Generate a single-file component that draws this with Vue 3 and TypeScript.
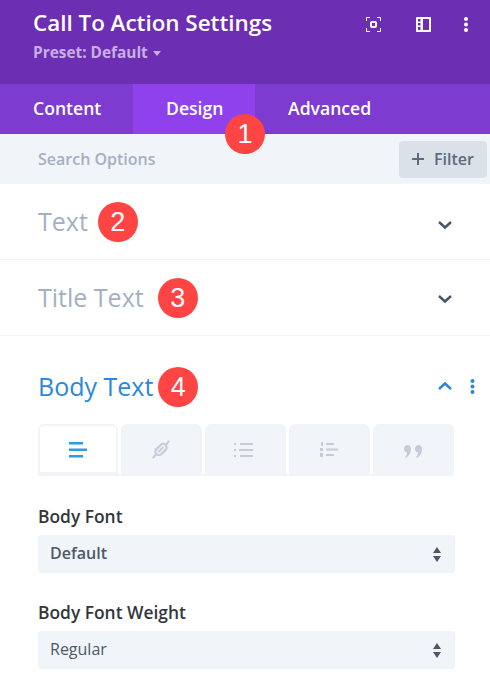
<template>
    <div class="panel">
        <header class="head">
            <div class="titles">
                <h1>Call To Action Settings</h1>
                <div class="preset">Preset: Default <span class="caret"></span></div>
            </div>
            <div class="head-icons">
                <svg width="15" height="15" viewBox="0 0 15 15" fill="none" stroke="#fff">
                    <path d="M.5 4V.5H4M11 .5h3.500V4M14.500 11v3.500H11M4 14.500H.5V11" />
                    <rect x="5" y="5" width="5" height="5" rx="1" stroke-width="2" />
                </svg>
                <svg width="15" height="15" viewBox="0 0 15 15">
                    <path
                        fill="#fff"
                        fill-rule="evenodd"
                        d="M1 0h13a1 1 0 0 1 1 1v13a1 1 0 0 1-1 1H1a1 1 0 0 1-1-1V1a1 1 0 0 1 1-1Zm1 2v2.500h2.500V2Zm0 4v2.500h2.500V6Zm0 4v3h2.500v-3ZM7 2v11h6V2Z"
                    />
                </svg>
                <svg class="more" width="6" height="15" viewBox="0 0 6 15" fill="#fff">
                    <circle cx="3" cy="2" r="2" />
                    <circle cx="3" cy="7.500" r="2" />
                    <circle cx="3" cy="13" r="2" />
                </svg>
            </div>
        </header>

        <nav class="tabs">
            <div class="tab first">Content</div>
            <div class="tab active">
                Design
                <span class="badge one">1</span>
            </div>
            <div class="tab">Advanced</div>
        </nav>

        <div class="search">
            <span class="placeholder">Search Options</span>
            <button class="filter">
                <svg width="12" height="12" viewBox="0 0 12 12" fill="#5d6b7c">
                    <path d="M5 0h2v5h5v2H7v5H5V7H0V5h5Z" />
                </svg>
                Filter
            </button>
        </div>

        <section class="group">
            <h2>Text</h2>
            <span class="badge inline b2">2</span>
            <svg class="chev" width="16" height="10" viewBox="0 0 16 10" fill="none" stroke="#475569" stroke-width="2.400">
                <path d="M2 2l6 5.500L14 2" />
            </svg>
        </section>
        <section class="group">
            <h2>Title Text</h2>
            <span class="badge inline b3">3</span>
            <svg class="chev" width="16" height="10" viewBox="0 0 16 10" fill="none" stroke="#475569" stroke-width="2.400">
                <path d="M2 2l6 5.500L14 2" />
            </svg>
        </section>

        <section class="open">
            <div class="open-head">
                <h2>Body Text</h2>
                <span class="badge inline b4">4</span>
                <svg class="chev up" width="16" height="10" viewBox="0 0 16 10" fill="none" stroke="#2b87da" stroke-width="2.400">
                    <path d="M2 8l6-5.500L14 8" />
                </svg>
                <svg class="dots" width="5" height="15" viewBox="0 0 5 15" fill="#2b87da">
                    <circle cx="2.500" cy="2" r="2" />
                    <circle cx="2.500" cy="7.500" r="2" />
                    <circle cx="2.500" cy="13" r="2" />
                </svg>
            </div>

            <div class="subtabs">
                <div class="subtab current">
                    <svg width="18" height="16" viewBox="0 0 18 16" fill="#2b9bea">
                        <rect x="0" y="0" width="14" height="2.500" />
                        <rect x="0" y="6.500" width="18" height="2.500" />
                        <rect x="0" y="13" width="14" height="2.500" />
                    </svg>
                </div>
                <div class="subtab">
                    <svg width="18" height="19" viewBox="0 0 18 19" fill="none" stroke="#c3ccd8">
                        <rect x="2.500" y="6" width="13" height="7" rx="3.500" stroke-width="2.200" transform="rotate(-45 9 9.500)" />
                        <path d="M6.500 12 11.500 7" stroke-width="1.800" />
                        <path d="M.8 18.200 3.800 14.700M14.200 4.300 17.200.8" stroke-width="2" />
                    </svg>
                </div>
                <div class="subtab list">
                    <svg width="19" height="14" viewBox="0 0 19 14" fill="#c3ccd8">
                        <rect x="0" y="0" width="2" height="2" />
                        <rect x="0" y="6" width="2" height="2" />
                        <rect x="0" y="12" width="2" height="2" />
                        <rect x="6" y="0" width="13" height="2" />
                        <rect x="5" y="6" width="14" height="2" />
                        <rect x="6" y="12" width="13" height="2" />
                    </svg>
                </div>
                <div class="subtab">
                    <svg width="19" height="15" viewBox="0 0 19 15" fill="#c3ccd8">
                        <rect x="1" y="0" width="2" height="4" />
                        <rect x="0" y="6" width="3" height="3" />
                        <rect x="0" y="11" width="3" height="4" />
                        <rect x="6" y="1" width="8" height="2" />
                        <rect x="6" y="6.500" width="12" height="2" />
                        <rect x="6" y="12" width="8" height="2" />
                    </svg>
                </div>
                <div class="subtab quote">
                    <svg width="18" height="13" viewBox="0 0 18 13" fill="#c3ccd8">
                        <path d="M3.500 0C6 0 7 2 7 4 7 8 5 11 2 13L1 12C2.500 10.500 3 9 3 7.500 1.200 7.200 0 5.800 0 3.800 0 1.500 1.500 0 3.500 0Z" />
                        <path transform="translate(11)" d="M3.500 0C6 0 7 2 7 4 7 8 5 11 2 13L1 12C2.500 10.500 3 9 3 7.500 1.200 7.200 0 5.800 0 3.800 0 1.500 1.500 0 3.500 0Z" />
                    </svg>
                </div>
            </div>

            <div class="field">
                <label>Body Font</label>
                <div class="select">
                    <span class="strong">Default</span>
                    <svg width="8" height="15" viewBox="0 0 8 15" fill="#4d5868">
                        <path d="M4 0l4 6H0ZM0 9h8l-4 6Z" />
                    </svg>
                </div>
            </div>
            <div class="field">
                <label>Body Font Weight</label>
                <div class="select">
                    <span>Regular</span>
                    <svg width="8" height="15" viewBox="0 0 8 15" fill="#4d5868">
                        <path d="M4 0l4 6H0ZM0 9h8l-4 6Z" />
                    </svg>
                </div>
            </div>
        </section>
    </div>
</template>

<script setup lang="ts"></script>

<style>
html,
body {
    margin: 0;
    background: #fff;
}
</style>

<style scoped>
.panel {
    width: 490px;
    height: 688px;
    overflow: hidden;
    font-family: "Open Sans", sans-serif;
    background: #fff;
}
.head {
    height: 84px;
    box-sizing: border-box;
    background: #6c2eb3;
    padding: 8px 21px 0 33px;
    display: flex;
    justify-content: space-between;
}
h1 {
    margin: 0;
    font-size: 22.4px;
    line-height: 30px;
    font-weight: 600;
    color: #fff;
}
.preset {
    margin-top: 5px;
    font-size: 15.4px;
    line-height: 20px;
    font-weight: 700;
    color: #c8aee6;
}
.caret {
    display: inline-block;
    margin-left: 1px;
    vertical-align: 2px;
    border: 4px solid transparent;
    border-top: 5px solid #c8aee6;
    border-bottom: 0;
}
.head-icons {
    display: flex;
    align-items: center;
    gap: 35px;
    height: 33px;
}
.more {
    margin-left: -3px;
}
.tabs {
    height: 50px;
    display: flex;
    background: #7d3bcf;
}
.tab {
    position: relative;
    width: 122px;
    box-sizing: border-box;
    padding-left: 33px;
    font-size: 17.6px;
    font-weight: 600;
    line-height: 48px;
    color: #fff;
}
.tab.first {
    width: 133px;
}
.tab.active {
    background: #8f42ec;
}
.badge {
    position: absolute;
    width: 40px;
    height: 40px;
    border-radius: 50%;
    background: #ff4444;
    color: #fff;
    font-family: "Liberation Sans", sans-serif;
    font-size: 27px;
    font-weight: 400;
    line-height: 40px;
    text-align: center;
}
.badge.one {
    left: 92px;
    top: 30px;
}
.search {
    height: 50px;
    box-sizing: border-box;
    background: #f1f5f9;
    display: flex;
    align-items: center;
    justify-content: space-between;
    padding: 0 3px 0 38px;
}
.placeholder {
    font-size: 16px;
    font-weight: 600;
    color: #a3b0c2;
}
.filter {
    width: 88px;
    height: 37px;
    border: 0;
    border-radius: 4px;
    background: #dbe1e9;
    color: #5d6b7c;
    font-family: inherit;
    font-size: 16px;
    font-weight: 600;
    display: flex;
    align-items: center;
    justify-content: center;
    gap: 10px;
    padding: 0;
}
.group {
    position: relative;
    height: 76px;
    box-sizing: border-box;
    border-bottom: 1px solid #f1f5f9;
    display: flex;
    align-items: center;
    padding-left: 38px;
}
h2 {
    margin: 0 0 2px;
    font-size: 25px;
    font-weight: 400;
    line-height: 32px;
    color: #a3b0c2;
}
.badge.inline {
    position: static;
    flex: none;
}
.b2 {
    margin-left: 10px;
}
.b3 {
    margin-left: 14px;
}
.b4 {
    margin-left: 5px;
}
.chev {
    position: absolute;
    left: 437px;
    top: 34px;
}
.group:first-of-type .chev {
    top: 36px;
}
.open {
    padding: 0 35px 0 38px;
}
.open-head {
    position: relative;
    height: 88px;
    display: flex;
    align-items: center;
    margin: 0 -35px 0 -38px;
    padding: 14px 0 0 38px;
    box-sizing: border-box;
}
.open-head h2 {
    color: #2b87da;
}
.open-head .up {
    top: 45px;
}
.dots {
    position: absolute;
    left: 470px;
    top: 43px;
}
.subtabs {
    display: flex;
    gap: 2.5px;
    height: 52px;
    margin-right: 1px;
    box-sizing: border-box;
    border-bottom: 2px solid #f1f5f9;
}
.subtab {
    flex: 1;
    padding-top: 1px;
    box-sizing: border-box;
    background: #f1f5f9;
    border-radius: 6px 6px 0 0;
    display: flex;
    align-items: center;
    justify-content: center;
}
.subtab.current {
    flex: none;
    width: 80px;
    background: #fff;
    box-shadow: inset 0 0 0 2px #f1f5f9;
}
.subtab.list svg {
    margin-right: 3px;
}
.subtab.quote svg {
    margin-top: 3px;
}
.field {
    margin-top: 28px;
}
.field + .field {
    margin-top: 27px;
}
label {
    display: block;
    font-size: 17.4px;
    font-weight: 600;
    line-height: 24px;
    color: #32373c;
}
.select {
    margin-top: 7px;
    height: 38px;
    border-radius: 4px;
    background: #f1f5f9;
    display: flex;
    align-items: center;
    justify-content: space-between;
    padding: 0 14px 0 12px;
    font-size: 16px;
    color: #4d5868;
}
.select span {
    margin-bottom: 2px;
}
.strong {
    font-weight: 600;
}
</style>
